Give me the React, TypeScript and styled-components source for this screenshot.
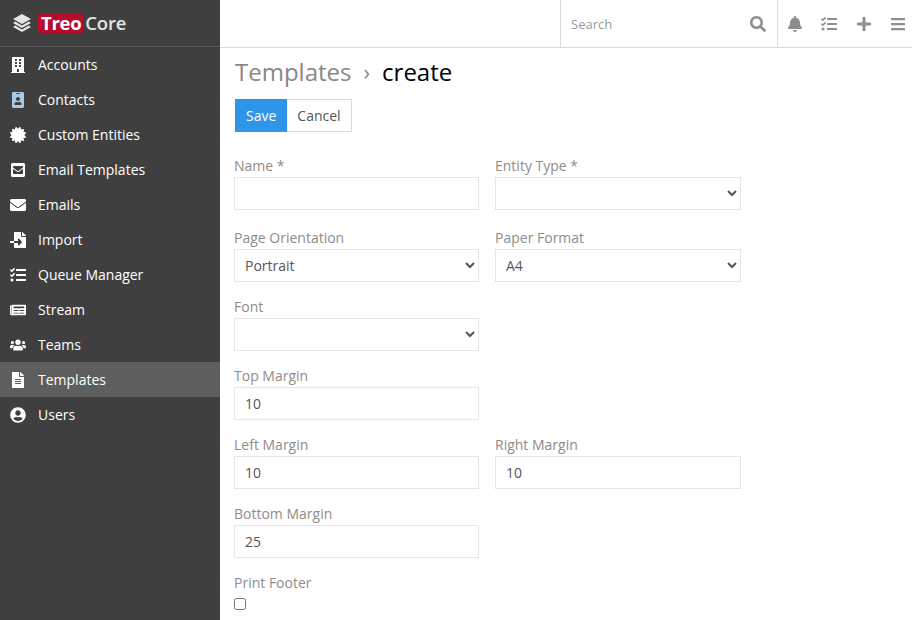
import * as React from "react";
import styled, { createGlobalStyle } from "styled-components";
import {
  FaBars,
  FaBell,
  FaBuilding,
  FaCertificate,
  FaEnvelope,
  FaEnvelopeSquare,
  FaFileAlt,
  FaFileImport,
  FaIdBadge,
  FaNewspaper,
  FaPlus,
  FaSearch,
  FaTasks,
  FaUserCircle,
  FaUsers,
} from "react-icons/fa";

const sidebarBg = "#3f3f3f";
const activeBg = "#5e5e5e";
const lineGrey = "#dcdcdc";
const inputLine = "#e6e6e6";
const labelGrey = "#8f8c89";
const iconGrey = "#8e8e8e";
const blue = "#2d96e8";

const GlobalStyle = createGlobalStyle`
  html, body {
    margin: 0;
    height: 100%;
    overflow: hidden;
    background: #fff;
    font-family: "Open Sans", "Liberation Sans", sans-serif;
    font-size: 14px;
  }
  * { box-sizing: border-box; }
`;

const Page = styled.div`
  display: grid;
  grid-template-columns: 220px 1fr;
  width: 912px;
  height: 620px;
  overflow: hidden;
`;

const Sidebar = styled.aside`
  background: ${sidebarBg};
  display: flex;
  flex-direction: column;
`;

const Brand = styled.div`
  height: 47px;
  flex: none;
  display: flex;
  align-items: center;
  padding-left: 12px;
  border-bottom: 1px solid #585858;
`;

const BrandMark = styled.svg`
  width: 20px;
  height: 20px;
  margin-right: 6px;
`;

const BrandTreo = styled.span`
  background: #b80c2b;
  color: #fff;
  font-weight: 700;
  font-size: 18.5px;
  line-height: 19px;
  height: 20px;
  padding: 0 2px 0 3px;
  border-radius: 3px;
  letter-spacing: -0.3px;
`;

const BrandCore = styled.span`
  color: #e4e4e4;
  font-weight: 600;
  font-size: 18.5px;
  line-height: 20px;
  margin-left: 2px;
  letter-spacing: -0.2px;
`;

const NavRow = styled.div<{ $active?: boolean }>`
  height: 35px;
  flex: none;
  display: flex;
  align-items: center;
  color: #fff;
  font-size: 14px;
  background: ${(p) => (p.$active ? activeBg : "transparent")};
`;

const NavIcon = styled.span<{ $tint?: string }>`
  width: 38px;
  flex: none;
  padding-left: 1px;
  display: flex;
  justify-content: center;
  padding-right: 3px;
  color: ${(p) => p.$tint ?? "#fff"};
  font-size: 16px;
`;

const Main = styled.main`
  display: flex;
  flex-direction: column;
  min-width: 0;
`;

const TopBar = styled.header`
  height: 48px;
  flex: none;
  display: flex;
  justify-content: flex-end;
  border-bottom: 1px solid ${lineGrey};
`;

const SearchBox = styled.div`
  width: 218px;
  display: flex;
  align-items: center;
  justify-content: space-between;
  padding: 0 11px 0 10px;
  border-left: 1px solid ${lineGrey};
  border-right: 1px solid ${lineGrey};
  color: ${iconGrey};
  font-size: 16px;
`;

const SearchText = styled.span`
  color: #9a9a9a;
  font-size: 13px;
`;

const TopIcons = styled.div`
  width: 134px;
  display: flex;
  align-items: center;
  justify-content: space-between;
  padding: 0 6px 0 9px;
  color: ${iconGrey};
  font-size: 16px;
`;

const Content = styled.div`
  padding: 8px 14px 0 14px;
`;

const Title = styled.h1`
  margin: 0 0 13px 1px;
  height: 30px;
  display: flex;
  align-items: center;
  font-size: 24px;
  font-weight: 400;
  color: #000;
`;

const TitleLink = styled.span`
  color: #8a8784;
`;

const TitleSep = styled.span`
  color: #8a8784;
  margin: 0 12px;
  font-size: 22px;
`;

const Buttons = styled.div`
  display: flex;
  margin: 0 0 25px 1px;
`;

const Button = styled.button<{ $primary?: boolean }>`
  height: 33px;
  padding: 0 10px;
  font: inherit;
  font-size: 14px;
  border: 1px solid ${(p) => (p.$primary ? blue : lineGrey)};
  border-left-width: ${(p) => (p.$primary ? 1 : 0)}px;
  background: ${(p) => (p.$primary ? blue : "#fff")};
  color: ${(p) => (p.$primary ? "#fff" : "#555")};
`;

const FormGrid = styled.div`
  display: grid;
  grid-template-columns: 245px 246px;
  column-gap: 16px;
  width: 507px;
`;

const Field = styled.div<{ $gap?: number }>`
  margin-bottom: ${(p) => p.$gap ?? 16}px;
`;

const FullRow = styled.div`
  grid-column: 1 / -1;
  width: 245px;
`;

const Label = styled.div`
  height: 20px;
  line-height: 20px;
  margin-top: -1px;
  color: ${labelGrey};
  font-size: 14px;
  margin-bottom: 1px;
`;

const controlCss = `
  display: block;
  width: 100%;
  height: 33px;
  border: 1px solid ${inputLine};
  background: #fff;
  color: #555;
  font-family: inherit;
  font-size: 14px;
  outline: none;
`;

const Input = styled.input`
  ${controlCss}
  padding: 0 10px;
`;

const Select = styled.select`
  ${controlCss}
  padding: 0 6px;
`;

const Check = styled.input`
  display: block;
  width: 12px;
  height: 12px;
  margin: 5px 0 0 0;
`;

const items: { name: string; icon: React.ReactNode; tint?: string; active?: boolean }[] = [
  { name: "Accounts", icon: <FaBuilding /> },
  { name: "Contacts", icon: <FaIdBadge />, tint: "#a9cbe8" },
  { name: "Custom Entities", icon: <FaCertificate /> },
  { name: "Email Templates", icon: <FaEnvelopeSquare /> },
  { name: "Emails", icon: <FaEnvelope /> },
  { name: "Import", icon: <FaFileImport /> },
  { name: "Queue Manager", icon: <FaTasks /> },
  { name: "Stream", icon: <FaNewspaper /> },
  { name: "Teams", icon: <FaUsers /> },
  { name: "Templates", icon: <FaFileAlt />, active: true },
  { name: "Users", icon: <FaUserCircle /> },
];

export default function App() {
  return (
    <Page>
      <GlobalStyle />
      <Sidebar>
        <Brand>
          <BrandMark viewBox="0 0 20 20">
            <path d="M10 1 19 6 10 11 1 6Z" fill="#e4e4e4" />
            <path d="M3.2 8.6 10 12.4 16.8 8.6 19 10 10 15 1 10Z" fill="#e4e4e4" />
            <path d="M3.2 12.6 10 16.4 16.8 12.6 19 14 10 19 1 14Z" fill="#e4e4e4" />
          </BrandMark>
          <BrandTreo>Treo</BrandTreo>
          <BrandCore>Core</BrandCore>
        </Brand>
        {items.map((item) => (
          <NavRow key={item.name} $active={item.active}>
            <NavIcon $tint={item.tint}>{item.icon}</NavIcon>
            {item.name}
          </NavRow>
        ))}
      </Sidebar>
      <Main>
        <TopBar>
          <SearchBox>
            <SearchText>Search</SearchText>
            <FaSearch />
          </SearchBox>
          <TopIcons>
            <FaBell />
            <FaTasks />
            <FaPlus />
            <FaBars />
          </TopIcons>
        </TopBar>
        <Content>
          <Title>
            <TitleLink>Templates</TitleLink>
            <TitleSep>›</TitleSep>
            create
          </Title>
          <Buttons>
            <Button $primary>Save</Button>
            <Button>Cancel</Button>
          </Buttons>
          <FormGrid>
            <Field $gap={19}>
              <Label>Name *</Label>
              <Input />
            </Field>
            <Field $gap={19}>
              <Label>Entity Type *</Label>
              <Select />
            </Field>
            <Field>
              <Label>Page Orientation</Label>
              <Select defaultValue="Portrait">
                <option>Portrait</option>
              </Select>
            </Field>
            <Field>
              <Label>Paper Format</Label>
              <Select defaultValue="A4">
                <option>A4</option>
              </Select>
            </Field>
            <FullRow>
              <Field>
                <Label>Font</Label>
                <Select />
              </Field>
            </FullRow>
            <FullRow>
              <Field>
                <Label>Top Margin</Label>
                <Input defaultValue="10" />
              </Field>
            </FullRow>
            <Field>
              <Label>Left Margin</Label>
              <Input defaultValue="10" />
            </Field>
            <Field>
              <Label>Right Margin</Label>
              <Input defaultValue="10" />
            </Field>
            <FullRow>
              <Field>
                <Label>Bottom Margin</Label>
                <Input defaultValue="25" />
              </Field>
            </FullRow>
            <FullRow>
              <Label>Print Footer</Label>
              <Check type="checkbox" />
            </FullRow>
          </FormGrid>
        </Content>
      </Main>
    </Page>
  );
}
